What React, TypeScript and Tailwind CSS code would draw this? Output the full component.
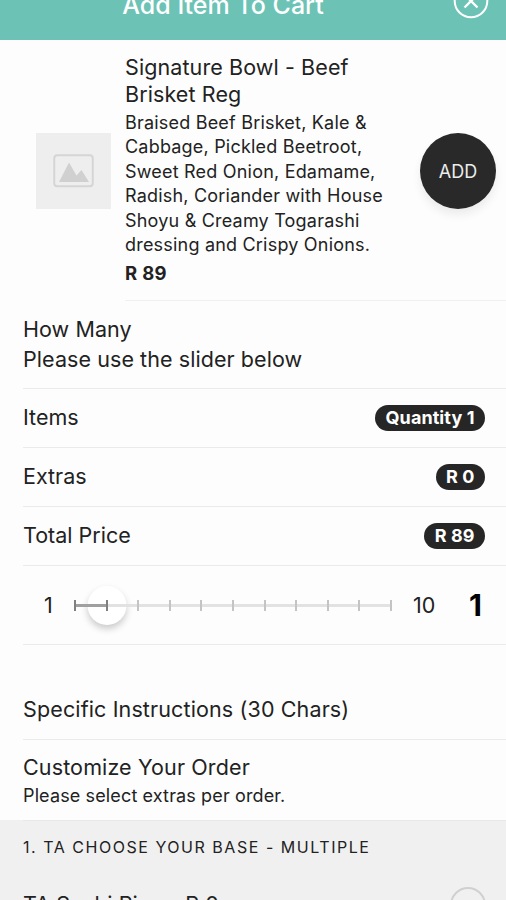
import { useState } from "react";
import type { ReactNode } from "react";

const TICKS = Array.from({ length: 11 }, (_, i) => i);

function Badge({ children }: { children: ReactNode }) {
  return (
    <span className="flex h-[26px] items-center rounded-full bg-[#262626] px-[10.5px] text-[18px] font-bold tracking-[0.08px] whitespace-nowrap text-white">
      {children}
    </span>
  );
}

function Row({ label, value }: { label: string; value: string }) {
  return (
    <div className="ml-[23px] flex h-[59px] items-center justify-between border-b border-[#ebebeb] pr-[21px]">
      <span className="text-[21.5px]">{label}</span>
      <Badge>{value}</Badge>
    </div>
  );
}

function Header() {
  return (
    <header className="relative flex h-10 shrink-0 items-end justify-center overflow-hidden bg-[#6cc3b5] pb-[19px]">
      <h1 className="-ml-[60px] text-[25px] leading-8 font-medium whitespace-nowrap text-white">Add Item To Cart</h1>
      <button aria-label="Close" className="absolute top-[-17px] right-[17px]">
        <svg width="36" height="36" viewBox="0 0 36 36" fill="none" stroke="white" strokeWidth="2">
          <circle cx="18" cy="18" r="16.3" />
          <path d="M11.5 11.5l13 13M24.5 11.5l-13 13" strokeWidth="2.4" />
        </svg>
      </button>
    </header>
  );
}

function Slider({ value, onChange }: { value: number; onChange: (v: number) => void }) {
  return (
    <div className="relative flex h-10 w-[318px] items-center">
      <div className="absolute h-[39px] w-[39px] -translate-x-1/2 rounded-full bg-white shadow-[0_4px_7px_rgba(0,0,0,0.2)]" style={{ left: `${value * 10 + 0.3}%` }} />
      <div className="absolute h-[3px] w-full bg-[#e2e2e2]" />
      <div className="absolute h-[3px] bg-[#a0a0a0]" style={{ width: `${value * 10}%` }} />
      <div className="relative flex w-full justify-between">
        {TICKS.map((i) => (
          <button
            key={i}
            aria-label={String(i)}
            onClick={() => onChange(Math.max(1, i))}
            className={i <= value ? "h-[11px] w-[2px] bg-[#808080]" : "h-[11px] w-[2px] bg-[#c4c4c4]"}
          />
        ))}
      </div>
    </div>
  );
}

export default function App() {
  const [quantity, setQuantity] = useState(1);

  return (
    <div className="flex h-[900px] w-[506px] flex-col overflow-hidden bg-[#fdfdfd] font-['Inter',sans-serif] text-[#222222]">
      <Header />

      <section className="flex h-[261px] shrink-0">
        <div className="mt-[93px] ml-9 flex h-[76px] w-[75px] items-center justify-center bg-[#eeeeee]">
          <svg width="42" height="34" viewBox="0 0 42 34" fill="none">
            <rect x="1.25" y="1.25" width="38.5" height="31" rx="3" stroke="#d5d5d5" strokeWidth="2" />
            <path d="M6 28L16 8.5l7.5 13 5-5.5L36 28z" fill="#d0d0d0" />
          </svg>
        </div>
        <div className="ml-[14px] flex flex-1 border-b border-[#f0f0f0]">
          <div className="pt-[14px]">
            <h2 className="text-[21.5px] leading-[27px] tracking-[0.1px] whitespace-nowrap">
              Signature Bowl - Beef
              <br />
              Brisket Reg
            </h2>
            <p className="mt-[3px] text-[18px] leading-[24.4px] tracking-[0.2px] whitespace-nowrap">
              Braised Beef Brisket, Kale &amp;
              <br />
              Cabbage, Pickled Beetroot,
              <br />
              Sweet Red Onion, Edamame,
              <br />
              Radish, Coriander with House
              <br />
              Shoyu &amp; Creamy Togarashi
              <br />
              dressing and Crispy Onions.
            </p>
            <p className="mt-1 text-[18.5px] leading-6 font-bold tracking-[0.3px]">R 89</p>
          </div>
          <button className="mt-[93px] mr-[10px] ml-auto h-[76px] w-[76px] rounded-full bg-[#292929] text-[18px] text-[#ececec] shadow-[0_6px_10px_rgba(0,0,0,0.07)]">
            ADD
          </button>
        </div>
      </section>

      <main className="shrink-0">
        <div className="ml-[23px] h-[87.5px] border-b border-[#ebebeb] pt-[13px] text-[21.5px] leading-[30px] tracking-[0.07px]">
          <p>How Many</p>
          <p>Please use the slider below</p>
        </div>
        <Row label="Items" value={`Quantity ${quantity}`} />
        <Row label="Extras" value="R 0" />
        <Row label="Total Price" value={`R ${89 * quantity}`} />

        <div className="ml-[23px] flex h-[79px] items-center border-b border-[#ebebeb] pt-[2px]">
          <span className="w-[51px] pl-[21px] text-[21.5px]">1</span>
          <Slider value={quantity} onChange={setQuantity} />
          <span className="ml-[21px] w-[56px] text-[21.5px]">10</span>
          <span className="text-[30px] font-bold text-black">{quantity}</span>
        </div>

        <div className="mt-[35px] ml-[23px] flex h-[60px] items-center border-b border-[#ebebeb] text-[21.5px] tracking-[0.13px]">
          Specific Instructions (30 Chars)
        </div>
        <div className="ml-[23px] h-[80px] pt-3">
          <h2 className="text-[21.5px] leading-[30px] tracking-[0.13px]">Customize Your Order</h2>
          <p className="text-[18px] leading-[27px] tracking-[0.13px]">Please select extras per order.</p>
        </div>
      </main>

      <section className="h-[140px] shrink-0 bg-[#f0f0f0]">
        <h3 className="ml-[23px] border-t border-[#e8e8e8] pt-[14px] text-[16px] leading-6 tracking-[1.53px]">
          1. TA CHOOSE YOUR BASE - MULTIPLE
        </h3>
        <label className="mt-[28px] ml-[23px] flex items-center justify-between pr-5">
          <span className="text-[21.5px] tracking-[0.1px]">TA Sushi Rice - R 0</span>
          <span className="h-9 w-9 rounded-full border-2 border-[#d0d0d0]" />
        </label>
      </section>
    </div>
  );
}
